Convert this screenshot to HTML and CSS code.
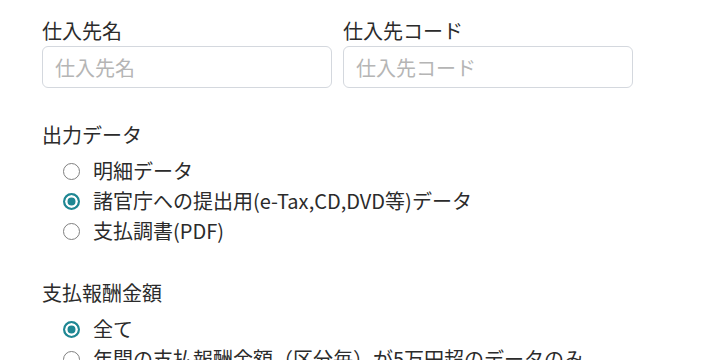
FILE: index.html
```html
<!DOCTYPE html>
<html lang="ja">
<head>
    <meta charset="UTF-8">
    <title>支払調書出力</title>
    <link rel="stylesheet" href="styles.css">
</head>
<body>
    <div class="form">
        <div class="field-row">
            <div class="field">
                <label for="supplier-name">仕入先名</label>
                <input type="text" id="supplier-name" placeholder="仕入先名">
            </div>
            <div class="field">
                <label for="supplier-code">仕入先コード</label>
                <input type="text" id="supplier-code" placeholder="仕入先コード">
            </div>
        </div>

        <div class="group">
            <div class="group-title">出力データ</div>
            <ul class="radio-list">
                <li><label><input type="radio" name="output"> 明細データ</label></li>
                <li><label><input type="radio" name="output" checked> 諸官庁への提出用(e-Tax,CD,DVD等)データ</label></li>
                <li><label><input type="radio" name="output"> 支払調書(PDF)</label></li>
            </ul>
        </div>

        <div class="group">
            <div class="group-title">支払報酬金額</div>
            <ul class="radio-list">
                <li><label><input type="radio" name="amount" checked> 全て</label></li>
                <li><label><input type="radio" name="amount"> 年間の支払報酬金額（区分毎）が5万円超のデータのみ</label></li>
            </ul>
        </div>
    </div>
</body>
</html>
```

FILE: styles.css
```css
body {
    margin: 0;
    font-family: "Noto Sans CJK JP", "Noto Sans", sans-serif;
    color: #2b2b2b;
    background: #fff;
}

.form {
    padding: 17px 0 0 42px;
}

.field-row {
    display: flex;
    gap: 11px;
}

.field {
    width: 290px;
}

.field label {
    display: block;
    font-size: 20px;
    line-height: 28px;
    margin-bottom: 1px;
}

.field input {
    box-sizing: border-box;
    width: 100%;
    height: 42px;
    padding: 0 12px;
    border: 1px solid #d4d8de;
    border-radius: 6px;
    font-family: inherit;
    font-size: 20px;
    color: #333;
}

.field input::placeholder {
    color: #b5b5b5;
}

.group {
    margin-top: 33px;
}

.group-title {
    font-size: 20px;
    line-height: 28px;
}

.radio-list {
    list-style: none;
    margin: 7px 0 0;
    padding: 0 0 0 21px;
}

.radio-list li {
    font-size: 20px;
    line-height: 30px;
    white-space: nowrap;
}

.radio-list label {
    display: flex;
    align-items: center;
}

.radio-list input {
    appearance: none;
    flex: none;
    box-sizing: border-box;
    width: 17px;
    height: 17px;
    margin: 0 13px 0 0;
    border: 1.5px solid #808080;
    border-radius: 50%;
    background: #fff;
}

.radio-list input:checked {
    border: 2px solid #1f8793;
    box-shadow: inset 0 0 0 2.5px #fff;
    background: #1f8793;
}
```
